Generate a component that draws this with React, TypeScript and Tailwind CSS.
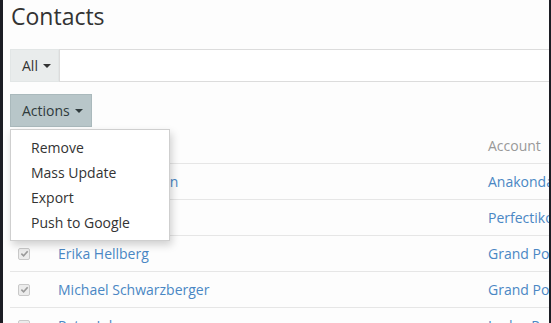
import React from 'react';

const rows = [
  { name: 'Tomas Gustafsson', account: 'Anakonda Ltd' },
  { name: 'Klaus Meyer', account: 'Perfectiko Inc' },
  { name: 'Erika Hellberg', account: 'Grand Port' },
  { name: 'Michael Schwarzberger', account: 'Grand Port' },
  { name: 'Peter Johnson', account: 'Ludus Pro' },
];

const actions = ['Remove', 'Mass Update', 'Export', 'Push to Google'];

function Caret() {
  return <span className="inline-block ml-[5px] align-middle border-t-[4px] border-t-current border-x-[4px] border-x-transparent" />;
}

function Check() {
  return (
    <span className="w-[12px] h-[12px] rounded-[2px] border border-[#c9c9c9] bg-[#ececec] flex items-center justify-center">
      <svg width="9" height="9" viewBox="0 0 10 10">
        <path d="M1.5 5.2 L4 7.6 L8.5 2.4" fill="none" stroke="#9a9a9a" strokeWidth="1.8" />
      </svg>
    </span>
  );
}

export default function App() {
  return (
    <div className="w-[551px] h-[323px] bg-[#1c1d24] flex overflow-hidden" style={{ fontFamily: '"Open Sans", sans-serif' }}>
      <div className="ml-[3px] w-[546px] h-full bg-[#fdfdfd] overflow-hidden px-[7px]">
        <div className="w-[640px]">
          <h1 className="text-[23px] leading-[32px] text-[#333] pl-[1px]">Contacts</h1>

          {/* search bar */}
          <div className="mt-[17px] flex h-[33px]">
            <button className="h-full w-[49px] pl-[11px] flex items-center bg-[#e9ecec] border border-[#e2e6e6] text-[14px] text-[#333]">
              All
              <Caret />
            </button>
            <div className="flex-1 h-full bg-white border border-[#dcdcdc]" />
          </div>

          {/* actions */}
          <div className="relative mt-[12px] h-[33px]">
            <button className="h-full w-[82px] pl-[11px] flex items-center bg-[#b8c6c9] border border-[#aab9bc] text-[14px] text-[#2f3a3c]">
              Actions
              <Caret />
            </button>
            <div className="absolute z-10 left-0 top-[35px] w-[160px] bg-white border border-[#cfcfcf] shadow-[2px_4px_8px_rgba(0,0,0,0.18)] py-[5px]">
              {actions.map(a => (
                <div key={a} className="h-[25px] leading-[25px] pl-[20px] text-[14px] text-[#333]">{a}</div>
              ))}
            </div>
          </div>

          {/* table */}
          <div className="w-[630px]">
            <div className="h-[36px] flex items-center text-[14px] text-[#999]">
              <div className="w-[48px]" />
              <div className="w-[430px]">Name</div>
              <div>Account</div>
            </div>
            {rows.map(r => (
              <div key={r.name} className="h-[36px] flex items-center border-t border-[#e6e6e6] text-[14px]">
                <div className="w-[48px] pl-[8px] flex items-center"><Check /></div>
                <div className="w-[430px] text-[#4a87c4]">{r.name}</div>
                <div className="text-[#4a87c4] whitespace-nowrap">{r.account}</div>
              </div>
            ))}
          </div>
        </div>
      </div>
    </div>
  );
}
